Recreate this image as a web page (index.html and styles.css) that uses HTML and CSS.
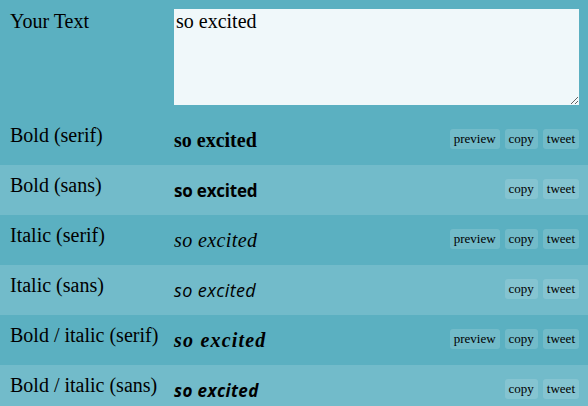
FILE: index.html
```html
<!DOCTYPE html>
<html lang="en">

<head>
  <meta charset="UTF-8" />
  <title>Fancy Text</title>
  <link rel="stylesheet" href="styles.css">
</head>

<body>
  <div class="row row-input">
    <div class="label">Your Text</div>
    <textarea class="source">so excited</textarea>
  </div>

  <div class="row">
    <div class="label">Bold (serif)</div>
    <div class="cell">
      <span class="out serif bold">so excited</span>
      <div class="actions">
        <button class="small-button">preview</button>
        <button class="small-button">copy</button>
        <button class="small-button">tweet</button>
      </div>
    </div>
  </div>

  <div class="row alt">
    <div class="label">Bold (sans)</div>
    <div class="cell">
      <span class="out sans bold">so excited</span>
      <div class="actions">
        <button class="small-button">copy</button>
        <button class="small-button">tweet</button>
      </div>
    </div>
  </div>

  <div class="row">
    <div class="label">Italic (serif)</div>
    <div class="cell">
      <span class="out serif italic">so excited</span>
      <div class="actions">
        <button class="small-button">preview</button>
        <button class="small-button">copy</button>
        <button class="small-button">tweet</button>
      </div>
    </div>
  </div>

  <div class="row alt">
    <div class="label">Italic (sans)</div>
    <div class="cell">
      <span class="out sans italic">so excited</span>
      <div class="actions">
        <button class="small-button">copy</button>
        <button class="small-button">tweet</button>
      </div>
    </div>
  </div>

  <div class="row">
    <div class="label">Bold / italic (serif)</div>
    <div class="cell">
      <span class="out serif bold italic">so excited</span>
      <div class="actions">
        <button class="small-button">preview</button>
        <button class="small-button">copy</button>
        <button class="small-button">tweet</button>
      </div>
    </div>
  </div>

  <div class="row alt">
    <div class="label">Bold / italic (sans)</div>
    <div class="cell">
      <span class="out sans bold italic">so excited</span>
      <div class="actions">
        <button class="small-button">copy</button>
        <button class="small-button">tweet</button>
      </div>
    </div>
  </div>
</body>

</html>
```

FILE: styles.css
```css
body {
  font-family: 'Liberation Serif', 'Times New Roman', serif;
  background-color: #5bb0c1;
  color: black;
  margin: 0;
  padding: 0;
}

.row {
  display: grid;
  grid-template-columns: 164px 1fr;
  height: 50px;
  padding: 0 9px 0 10px;
  box-sizing: border-box;
  align-items: start;
}

.row.alt {
  background-color: #72bbca;
}

.row-input {
  height: 115px;
  padding-top: 9px;
}

.label {
  font-size: 20px;
  line-height: 23px;
  padding-top: 9px;
}

.row-input .label {
  padding-top: 1px;
}

.source {
  width: 100%;
  height: 96px;
  box-sizing: border-box;
  background-color: #f0f8fa;
  border: none;
  outline: none;
  padding: 1px 2px;
  font-family: 'Liberation Serif', 'Times New Roman', serif;
  font-size: 20px;
  color: black;
  margin: 0;
}

.cell {
  display: flex;
  align-items: center;
  justify-content: space-between;
  height: 50px;
}

.out {
  line-height: 23px;
}

.out.serif {
  font-family: 'Liberation Serif', 'Times New Roman', serif;
  font-size: 20px;
}

.out.serif.italic {
  letter-spacing: 0.4px;
}

.out.serif.bold.italic {
  letter-spacing: 1.2px;
}

.out.sans {
  font-family: 'Open Sans', 'Liberation Sans', sans-serif;
  font-size: 17px;
}

.out.sans.bold {
  letter-spacing: -0.2px;
}

.out.sans.italic {
  font-size: 18px;
  letter-spacing: 0.4px;
}

.out.sans.bold.italic {
  font-size: 17px;
  letter-spacing: 0.4px;
}

.bold {
  font-weight: bold;
}

.italic {
  font-style: italic;
}

.actions {
  display: flex;
  gap: 5px;
  margin-top: -2px;
}

.small-button {
  background: rgba(255, 255, 255, 0.14);
  border: none;
  border-radius: 3px;
  padding: 0 4px;
  height: 20px;
  font-family: 'Liberation Serif', 'Times New Roman', serif;
  font-size: 13px;
  color: black;
  cursor: pointer;
}
```
